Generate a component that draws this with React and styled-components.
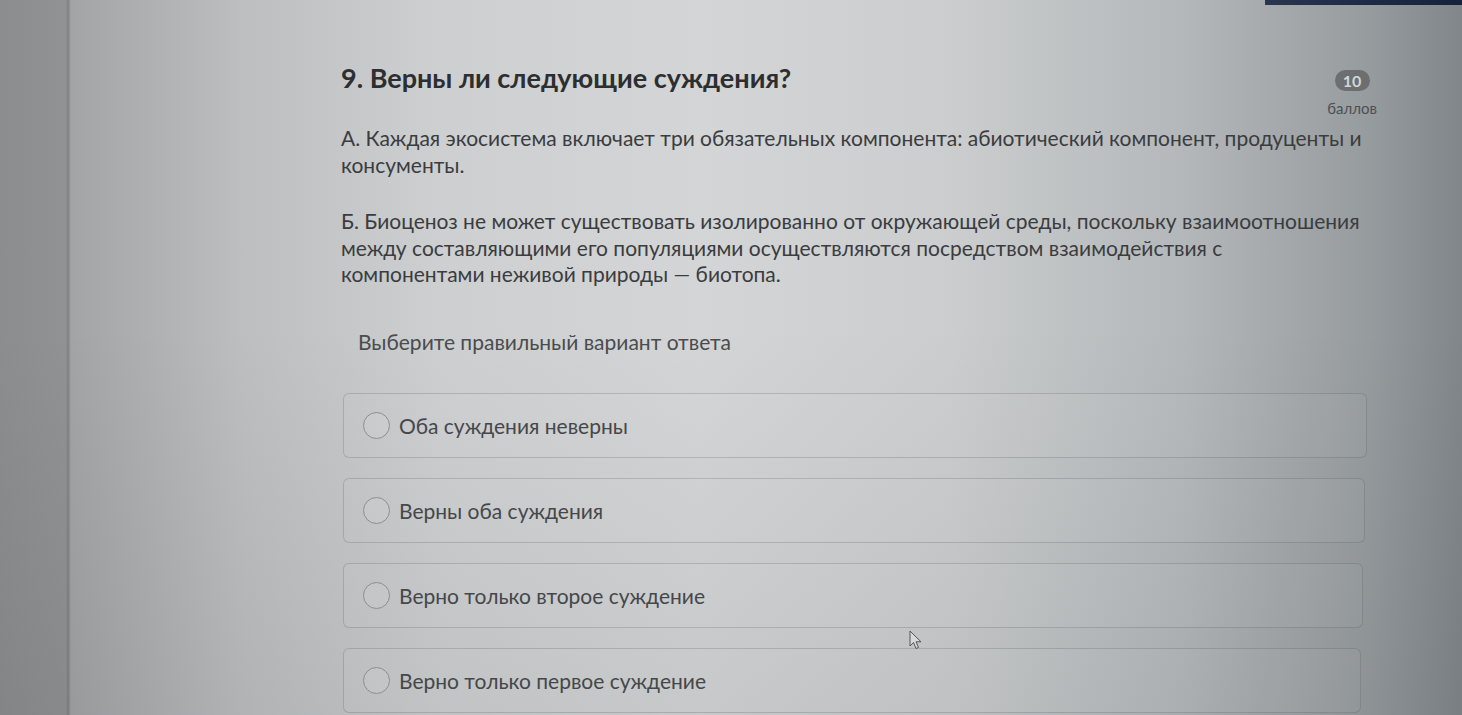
import React from 'react';
import styled, { createGlobalStyle } from 'styled-components';

const GlobalStyle = createGlobalStyle`
  html, body {
    margin: 0;
    padding: 0;
    height: 100%;
  }
  body {
    font-family: Lato, "Open Sans", "Noto Sans", sans-serif;
    color: #3a3c3e;
    background:
      linear-gradient(180deg, rgba(0,0,0,0) 0, rgba(0,0,0,0) 45%, rgba(20,24,28,0.07) 100%),
      linear-gradient(90deg, #8b8d8f 0, #909294 66px, #7e8082 68px, #a2a4a6 71px, #bcbec0 240px,
        #cdcfd0 440px, #d3d5d6 700px, #cbcdce 950px, #b4b8ba 1180px, #969b9e 1370px, #80868a 100%);
    overflow: hidden;
  }
`;

const TopStrip = styled.div`
  display: flex;
  justify-content: flex-end;
  height: 5px;
`;

const NavyBar = styled.div`
  width: 197px;
  height: 5px;
  background: linear-gradient(90deg, #2a3650, #15213d);
`;

const Column = styled.main`
  position: relative;
  margin-left: 341px;
  width: 1038px;
  padding-top: 57px;
`;

const Header = styled.div`
  display: flex;
  justify-content: space-between;
  align-items: flex-start;
`;

const Title = styled.h1`
  margin: 0;
  font-size: 27px;
  line-height: 32px;
  font-weight: 700;
  color: #2c2e30;
`;

const Score = styled.div`
  display: flex;
  flex-direction: column;
  align-items: center;
  padding-top: 8px;
  margin-right: 2px;
`;

const ScorePill = styled.span`
  display: flex;
  align-items: center;
  justify-content: center;
  width: 35px;
  height: 21px;
  border-radius: 11px;
  background: #6c6e70;
  color: #d3d5d6;
  font-size: 16px;
  font-weight: 700;
`;

const ScoreLabel = styled.span`
  margin-top: 8px;
  font-size: 15px;
  line-height: 18px;
  color: #4e5052;
`;

const Statement = styled.p`
  max-width: 1028px;
  margin: ${p => p.$top}px 0 0;
  font-size: 21px;
  line-height: 26.6px;
  color: #3a3c3e;
`;

const Prompt = styled.div`
  margin: 41px 0 0 17px;
  font-size: 21px;
  line-height: 26px;
  color: #4a4c4e;
`;

const Options = styled.div`
  display: flex;
  flex-direction: column;
  gap: 20px;
  margin: 38px 12px 0 2px;
`;

const Option = styled.label`
  display: flex;
  align-items: center;
  gap: 9px;
  box-sizing: border-box;
  height: 65px;
  padding-left: 19px;
  margin-right: ${p => p.$inset}px;
  border: 1px solid rgba(70, 74, 78, 0.22);
  border-radius: 6px;
  background: rgba(255, 255, 255, 0.03);
  font-size: 21px;
  color: #45474a;
  cursor: pointer;
`;

const Radio = styled.span`
  flex: none;
  width: 25px;
  height: 25px;
  border-radius: 50%;
  border: 1.5px solid #8c8e90;
  background: rgba(255, 255, 255, 0.08);
`;

const Pointer = styled.svg`
  position: absolute;
  left: 568px;
  top: 625px;
  width: 14px;
  height: 20px;
`;

const options = [
  { text: 'Оба суждения неверны', inset: 0 },
  { text: 'Верны оба суждения', inset: 2 },
  { text: 'Верно только второе суждение', inset: 4 },
  { text: 'Верно только первое суждение', inset: 6 },
];

export default function App() {
  return (
    <>
      <GlobalStyle />
      <TopStrip>
        <NavyBar />
      </TopStrip>
      <Column>
        <Header>
          <Title>9. Верны ли следующие суждения?</Title>
          <Score>
            <ScorePill>10</ScorePill>
            <ScoreLabel>баллов</ScoreLabel>
          </Score>
        </Header>
        <Statement $top={8}>
          А. Каждая экосистема включает три обязательных компонента: абиотический компонент, продуценты и консументы.
        </Statement>
        <Statement $top={30}>
          Б. Биоценоз не может существовать изолированно от окружающей среды, поскольку взаимоотношения между
          составляющими его популяциями осуществляются посредством взаимодействия с компонентами неживой природы — биотопа.
        </Statement>
        <Prompt>Выберите правильный вариант ответа</Prompt>
        <Options>
          {options.map(o => (
            <Option key={o.text} $inset={o.inset}>
              <Radio />
              {o.text}
            </Option>
          ))}
        </Options>
        <Pointer viewBox="0 0 14 20">
          <path d="M1 1 L1 16 L4.5 12.5 L7 18.5 L9.5 17.5 L7 11.8 L12 11.8 Z" fill="#d6d8d9" stroke="#55585b" strokeWidth="1" strokeLinejoin="round" />
        </Pointer>
      </Column>
    </>
  );
}
